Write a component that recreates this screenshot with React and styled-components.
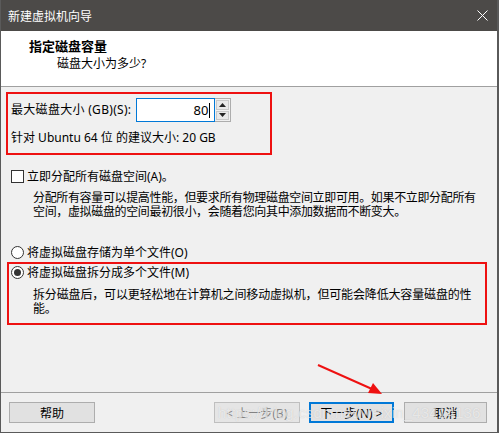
import React from "react";
import styled, { createGlobalStyle } from "styled-components";

const GlobalStyle = createGlobalStyle`
  html, body {
    margin: 0;
    padding: 0;
    background: #f0f0f0;
  }
  * {
    box-sizing: border-box;
  }
`;

const UI_FONT = `"Noto Sans", "Noto Sans CJK SC", sans-serif`;

const Window = styled.div`
  position: relative;
  width: 499px;
  height: 433px;
  display: flex;
  flex-direction: column;
  background: #f0f0f0;
  border-left: 1px solid #5a5a5a;
  border-right: 2px solid #5a5a5a;
  border-bottom: 1px solid #5a5a5a;
  font-family: ${UI_FONT};
  font-size: 12px;
  color: #000;
  overflow: hidden;
`;

const TitleBar = styled.div`
  height: 31px;
  flex-shrink: 0;
  display: flex;
  align-items: center;
  justify-content: space-between;
  background: #4c4a48;
  color: #fff;
  padding: 0 10px 0 8px;
  font-size: 12px;
  margin-left: -1px;
  margin-right: -2px;
`;

const CloseIcon = styled.svg`
  width: 11px;
  height: 11px;
  margin-right: 1px;
`;

const Header = styled.div`
  height: 56px;
  flex-shrink: 0;
  background: #fff;
  border-bottom: 1px solid #a0a0a0;
  display: flex;
  flex-direction: column;
  padding: 7px 0 0 28px;
`;

const HeaderTitle = styled.div`
  font-weight: bold;
  font-size: 13px;
  line-height: 17px;
`;

const HeaderSub = styled.div`
  line-height: 17px;
  margin-left: 28px;
`;

const Body = styled.div`
  flex: 1;
  display: flex;
  flex-direction: column;
  align-items: flex-start;
`;

const Highlight = styled.div`
  border: 2px solid #ee1111;
  margin-top: ${(p) => p.$top}px;
  margin-left: ${(p) => p.$left}px;
  width: ${(p) => p.$width}px;
  height: 63px;
  padding: ${(p) => p.$pad};
  display: flex;
  flex-direction: column;
`;

const SizeRow = styled.div`
  display: flex;
  align-items: center;
  height: 24px;
`;

const Label = styled.span`
  line-height: 16px;
  letter-spacing: 0.3px;
  white-space: nowrap;
`;

const SpinBox = styled.div`
  display: flex;
  margin-left: 5px;
  height: 24px;
`;

const NumberInput = styled.div`
  width: 79px;
  height: 24px;
  border: 1px solid #0078d7;
  background: #fff;
  display: flex;
  align-items: center;
  justify-content: flex-end;
  padding-right: 4px;
  font-size: 13px;
`;

const Caret = styled.span`
  display: inline-block;
  width: 1px;
  height: 15px;
  background: #000;
  margin-left: 1px;
`;

const SpinButtons = styled.div`
  width: 16px;
  height: 24px;
  border: 1px solid #adadad;
  border-left: none;
  display: flex;
  flex-direction: column;
  background: #f0f0f0;
`;

const SpinHalf = styled.div`
  flex: 1;
  display: flex;
  align-items: center;
  justify-content: center;
  border: 1px solid #c8c8c8;
  background: #e8e8e8;
  margin: 1px;
  margin-top: ${(p) => (p.$down ? 0 : 1)}px;
`;

const Hint = styled.div`
  line-height: 16px;
  margin-top: 8px;
  white-space: nowrap;
`;

const OptionRow = styled.div`
  display: flex;
  align-items: center;
  height: 16px;
  margin-top: ${(p) => p.$top || 0}px;
  margin-left: ${(p) => p.$left || 0}px;
  gap: 3px;
  white-space: nowrap;
`;

const CheckBox = styled.span`
  width: 13px;
  height: 13px;
  border: 1px solid #333;
  background: #fff;
  flex-shrink: 0;
`;

const Radio = styled.span`
  width: 13px;
  height: 13px;
  border-radius: 50%;
  border: 1px solid #333;
  background: #fff;
  flex-shrink: 0;
  display: flex;
  align-items: center;
  justify-content: center;
  &::after {
    content: "";
    width: 7px;
    height: 7px;
    border-radius: 50%;
    background: ${(p) => (p.$checked ? "#333" : "transparent")};
  }
`;

const Description = styled.div`
  line-height: 14px;
  letter-spacing: ${(p) => p.$spacing}px;
  margin-top: ${(p) => p.$top}px;
  margin-left: ${(p) => p.$left}px;
  white-space: nowrap;
`;

const Footer = styled.div`
  height: 40px;
  flex-shrink: 0;
  border-top: 1px solid #a0a0a0;
  display: flex;
  align-items: flex-start;
  padding: 9px 10px 0 8px;
`;

const Button = styled.div`
  width: ${(p) => p.$w || 86}px;
  height: 21px;
  display: flex;
  align-items: center;
  justify-content: center;
  background: ${(p) => (p.$disabled ? "#e5e5e5" : "#e1e1e1")};
  border: ${(p) => (p.$primary ? "2px solid #0078d7" : p.$disabled ? "1px solid #bfbfbf" : "1px solid #adadad")};
  color: ${(p) => (p.$disabled ? "#838383" : "#000")};
  margin-left: ${(p) => p.$gap || 0}px;
  white-space: nowrap;
`;

const Spacer = styled.div`
  flex: 1;
`;

const Arrow = styled.svg`
  position: absolute;
  left: 0;
  top: 0;
  width: 499px;
  height: 433px;
  pointer-events: none;
`;

const Watermark = styled.div`
  position: absolute;
  left: 217px;
  top: 404px;
  font-family: "Liberation Sans", Arial, sans-serif;
  font-size: 15px;
  letter-spacing: 0.2px;
  color: rgba(255, 255, 255, 0.6);
  text-shadow: 0 0 1px rgba(140, 140, 140, 0.4);
  pointer-events: none;
  white-space: nowrap;
`;

export default function App() {
  return (
    <>
      <GlobalStyle />
      <Window>
        <TitleBar>
          <span>新建虚拟机向导</span>
          <CloseIcon viewBox="0 0 11 11">
            <path d="M0.5 0.5 L10.5 10.5 M10.5 0.5 L0.5 10.5" stroke="#fff" strokeWidth="1" />
          </CloseIcon>
        </TitleBar>

        <Header>
          <HeaderTitle>指定磁盘容量</HeaderTitle>
          <HeaderSub>磁盘大小为多少?</HeaderSub>
        </Header>

        <Body>
          <Highlight $top={5} $left={5} $width={266} $pad="4px 0 0 3px">
            <SizeRow>
              <Label>最大磁盘大小 (GB)(S):</Label>
              <SpinBox>
                <NumberInput>
                  80
                  <Caret />
                </NumberInput>
                <SpinButtons>
                  <SpinHalf>
                    <svg width="7" height="4" viewBox="0 0 7 4">
                      <path d="M3.5 0 L7 4 L0 4 Z" fill="#222" />
                    </svg>
                  </SpinHalf>
                  <SpinHalf $down>
                    <svg width="7" height="4" viewBox="0 0 7 4">
                      <path d="M0 0 L7 0 L3.5 4 Z" fill="#222" />
                    </svg>
                  </SpinHalf>
                </SpinButtons>
              </SpinBox>
            </SizeRow>
            <Hint>针对 Ubuntu 64 位 的建议大小: 20 GB</Hint>
          </Highlight>

          <OptionRow $top={13} $left={10}>
            <CheckBox />
            <span>立即分配所有磁盘空间(A)。</span>
          </OptionRow>
          <Description $top={7} $left={32} $spacing={-0.35}>
            分配所有容量可以提高性能，但要求所有物理磁盘空间立即可用。如果不立即分配所有
            <br />
            空间，虚拟磁盘的空间最初很小，会随着您向其中添加数据而不断变大。
          </Description>

          <OptionRow $top={25} $left={10}>
            <Radio />
            <span>将虚拟磁盘存储为单个文件(O)</span>
          </OptionRow>

          <Highlight $top={2} $left={6} $width={480} $pad="0 0 0 2px">
            <OptionRow>
              <Radio $checked />
              <span>将虚拟磁盘拆分成多个文件(M)</span>
            </OptionRow>
            <Description $top={8} $left={22} $spacing={-0.15}>
              拆分磁盘后，可以更轻松地在计算机之间移动虚拟机，但可能会降低大容量磁盘的性
              <br />
              能。
            </Description>
          </Highlight>
        </Body>

        <Footer>
          <Button>帮助</Button>
          <Spacer />
          <Button $disabled>&lt; 上一步(B)</Button>
          <Button $primary $gap={9} $w={85}>下一步(N) &gt;</Button>
          <Button $gap={10} $w={83}>取消</Button>
        </Footer>

        <Watermark>https://blog.csdn.net/weixin_43414136</Watermark>

        <Arrow viewBox="0 0 499 433">
          <line x1="317" y1="365" x2="371" y2="389" stroke="#ee1111" strokeWidth="2" />
          <path d="M381 394 L367 393 L372 383 Z" fill="#ee1111" />
        </Arrow>
      </Window>
    </>
  );
}
